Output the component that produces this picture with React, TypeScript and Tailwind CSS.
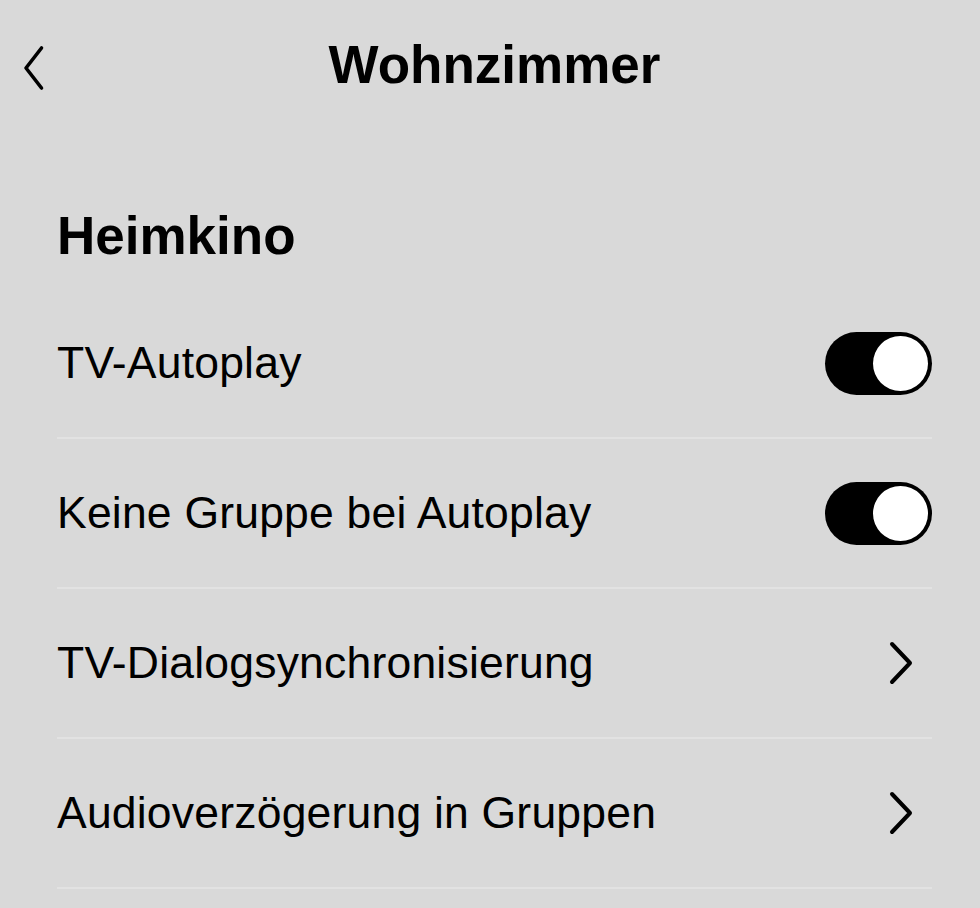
import React from 'react';

type Row = { label: string; kind: 'toggle' | 'link' };

const rows: Row[] = [
  { label: 'TV-Autoplay', kind: 'toggle' },
  { label: 'Keine Gruppe bei Autoplay', kind: 'toggle' },
  { label: 'TV-Dialogsynchronisierung', kind: 'link' },
  { label: 'Audioverzögerung in Gruppen', kind: 'link' },
];

function Toggle() {
  return (
    <div className="flex h-[63px] w-[107px] items-center justify-end rounded-full bg-black p-[4px]">
      <div className="h-[55px] w-[55px] rounded-full bg-white" />
    </div>
  );
}

function Chevron() {
  return (
    <svg width="26" height="46" viewBox="0 0 26 46" className="mr-[18px]">
      <path d="M4 4 L22 23 L4 42" fill="none" stroke="#000" strokeWidth="4" strokeLinecap="round" strokeLinejoin="round" />
    </svg>
  );
}

export default function App() {
  return (
    <div
      className="min-h-screen w-full bg-[#d9d9d9] text-black"
      style={{ fontFamily: '"Liberation Sans", Arial, sans-serif' }}
    >
      {/* ── Header ───────────────────────────────────────── */}
      <header className="grid h-[130px] grid-cols-[1fr_auto_1fr] items-center">
        <div className="pl-[23px] pt-[6px]">
          <svg width="22" height="46" viewBox="0 0 22 46">
            <path d="M18.5 3 L3 23 L18.5 43" fill="none" stroke="#000" strokeWidth="3.6" strokeLinecap="round" strokeLinejoin="round" />
          </svg>
        </div>
        <h1 className="pl-[9px] text-[53px] font-bold leading-[60px]">Wohnzimmer</h1>
        <div />
      </header>

      {/* ── Section ──────────────────────────────────────── */}
      <section className="pl-[57px] pr-[48px]">
        <h2 className="mt-[76px] text-[53px] font-bold leading-[60px]">Heimkino</h2>

        <div className="mt-[23px]">
          {rows.map((r) => (
            <div
              key={r.label}
              className="flex h-[150px] items-center justify-between border-b-2 border-[#e2e2e2]"
            >
              <span className="text-[44.5px] leading-[52px] tracking-[0.2px]">{r.label}</span>
              {r.kind === 'toggle' ? <Toggle /> : <Chevron />}
            </div>
          ))}
        </div>
      </section>
    </div>
  );
}
